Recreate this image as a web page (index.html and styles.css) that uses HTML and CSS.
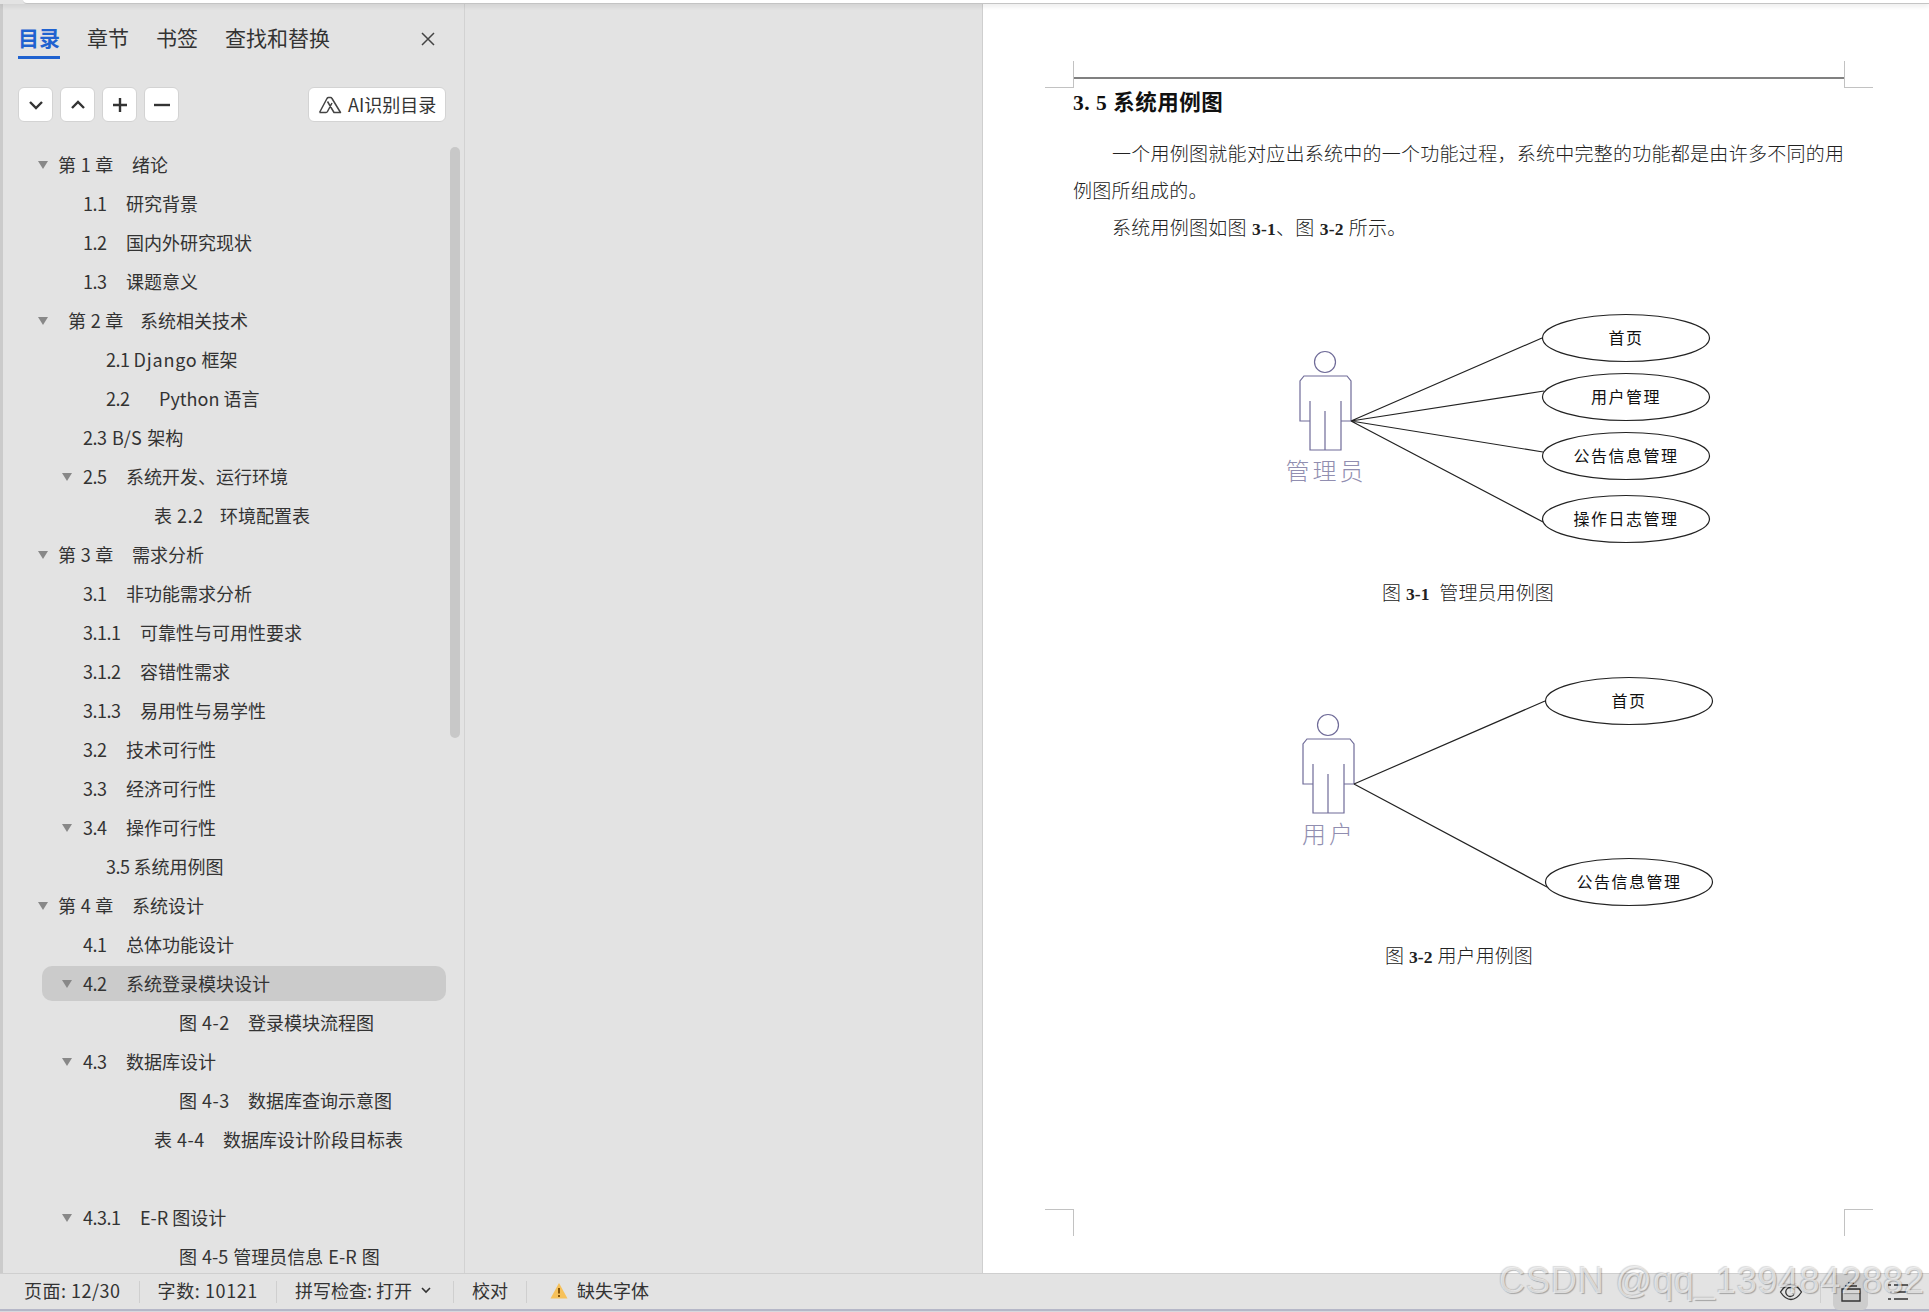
FILE: index.html
```html
<!DOCTYPE html>
<html lang="zh-CN">
<head>
<meta charset="utf-8">
<title>目录</title>
<link rel="stylesheet" href="styles.css">
</head>
<body>
<div class="app">
  <div class="topstrip"><div class="topstrip-gap"></div><div class="topstrip-fill"></div></div>
  <div class="main">
    <aside class="sidebar">
      <div class="tabs">
        <span class="tab active">目录</span>
        <span class="tab">章节</span>
        <span class="tab">书签</span>
        <span class="tab">查找和替换</span>
        <svg class="close" width="16" height="16" viewBox="0 0 16 16"><path d="M2 2L14 14M14 2L2 14" stroke="#444" stroke-width="1.5" fill="none"/></svg>
      </div>
      <div class="tools">
        <button class="tool"><svg width="16" height="16" viewBox="0 0 16 16"><path d="M2 5L8 11L14 5" stroke="#333" stroke-width="2.4" fill="none"/></svg></button>
        <button class="tool"><svg width="16" height="16" viewBox="0 0 16 16"><path d="M2 11L8 5L14 11" stroke="#333" stroke-width="2.4" fill="none"/></svg></button>
        <button class="tool"><svg width="16" height="16" viewBox="0 0 16 16"><path d="M8 1V15M1 8H15" stroke="#333" stroke-width="2.4" fill="none"/></svg></button>
        <button class="tool"><svg width="18" height="16" viewBox="0 0 18 16"><path d="M1 8H17" stroke="#333" stroke-width="2.4" fill="none"/></svg></button>
        <button class="ai"><svg width="24" height="18" viewBox="0 0 24 18"><path d="M1.500 16.500L9 2.500Q9.600 1.500 10.500 1.500H12.500Q13.500 1.500 14 2.500L22.500 16.500H16L9.500 5.500M1.500 16.500H8Q9 16.500 9.500 15.500L14 7" stroke="#444" stroke-width="1.500" fill="none" stroke-linejoin="round"/></svg><span class="ai-label">AI识别目录</span></button>
      </div>
      <div class="tree">
        <ul class="list">
          <li class="row l0"><i class="arr"></i><span class="n n73">第 1 章</span>绪论</li>
          <li class="row l1"><span class="n n43"><b>1.1</b></span>研究背景</li>
          <li class="row l1"><span class="n n43"><b>1.2</b></span>国内外研究现状</li>
          <li class="row l1"><span class="n n43"><b>1.3</b></span>课题意义</li>
          <li class="row l0b"><i class="arr wide"></i><span class="n n72">第 2 章</span>系统相关技术</li>
          <li class="row l2"><span><b>2.1</b> <span class="lat">Django</span> 框架</span></li>
          <li class="row l2"><span class="n n53"><b>2.2</b></span>Python 语言</li>
          <li class="row l1 spaced3"><span><b>2.3</b> B/S 架构</span></li>
          <li class="row l1"><i class="arr"></i><span class="n n43"><b>2.5</b></span>系统开发、运行环境</li>
          <li class="row l3"><span class="n n66 loose">表 2.2</span>环境配置表</li>
          <li class="row l0"><i class="arr"></i><span class="n n73">第 3 章</span>需求分析</li>
          <li class="row l1"><span class="n n43"><b>3.1</b></span>非功能需求分析</li>
          <li class="row l1"><span class="n n57"><b>3.1.1</b></span>可靠性与可用性要求</li>
          <li class="row l1"><span class="n n57"><b>3.1.2</b></span>容错性需求</li>
          <li class="row l1"><span class="n n57"><b>3.1.3</b></span>易用性与易学性</li>
          <li class="row l1"><span class="n n43"><b>3.2</b></span>技术可行性</li>
          <li class="row l1"><span class="n n43"><b>3.3</b></span>经济可行性</li>
          <li class="row l1"><i class="arr"></i><span class="n n43"><b>3.4</b></span>操作可行性</li>
          <li class="row l2"><span><b>3.5</b> 系统用例图</span></li>
          <li class="row l0"><i class="arr"></i><span class="n n73">第 4 章</span>系统设计</li>
          <li class="row l1"><span class="n n43"><b>4.1</b></span>总体功能设计</li>
          <li class="row l1 selected"><i class="arr"></i><span class="n n43"><b>4.2</b></span>系统登录模块设计</li>
          <li class="row l4"><span class="n n70 loose">图 4-2</span>登录模块流程图</li>
          <li class="row l1"><i class="arr"></i><span class="n n43"><b>4.3</b></span>数据库设计</li>
          <li class="row l4"><span class="n n70 loose">图 4-3</span>数据库查询示意图</li>
          <li class="row l3"><span class="n n69 loose">表 4-4</span>数据库设计阶段目标表</li>
          <li class="row blank"></li>
          <li class="row l1"><i class="arr"></i><span class="n n57"><b>4.3.1</b></span>E-R 图设计</li>
          <li class="row l4 spaced2">图 4-5 管理员信息 E-R 图</li>
        </ul>
        <div class="scroll"><div class="thumb"></div></div>
      </div>
    </aside>
    <div class="gap"></div>
    <section class="page">
      <div class="crop c-tl"></div>
      <div class="crop c-tr"></div>
      <div class="crop c-bl"></div>
      <div class="crop c-br"></div>
      <div class="header-line"></div>
      <h2 class="heading">3. 5 系统用例图</h2>
      <p class="para indent">一个用例图就能对应出系统中的一个功能过程，系统中完整的功能都是由许多不同的用</p>
      <p class="para">例图所组成的。</p>
      <p class="para indent">系统用例图如图 <b>3-1</b>、图 <b>3-2</b> 所示。</p>
      <svg class="fig fig1" viewBox="1260 300 480 280" width="480" height="280">
        <g class="actor">
          <circle cx="1325" cy="362" r="10.5"/>
          <path d="M1310 421H1300V381L1304 376H1347L1351 381V421H1341M1310 401V450H1341V401M1325 411V450"/>
        </g>
        <text class="actor-label" x="1326" y="480" text-anchor="middle">管理员</text>
        <g class="links">
          <path d="M1351 421L1542 338M1351 421L1544 391M1351 421L1543 452M1351 421L1545 523"/>
          <ellipse cx="1626" cy="338" rx="83.5" ry="23.5"/>
          <ellipse cx="1626" cy="397" rx="83.5" ry="23.5"/>
          <ellipse cx="1626" cy="456" rx="83.5" ry="23.5"/>
          <ellipse cx="1626" cy="519" rx="83.5" ry="23.5"/>
        </g>
        <text class="uc" x="1626" y="344" text-anchor="middle">首页</text>
        <text class="uc" x="1626" y="403" text-anchor="middle">用户管理</text>
        <text class="uc" x="1626" y="462" text-anchor="middle">公告信息管理</text>
        <text class="uc" x="1626" y="525" text-anchor="middle">操作日志管理</text>
      </svg>
      <p class="caption cap1">图 <b>3-1</b>&nbsp;&nbsp;管理员用例图</p>
      <svg class="fig fig2" viewBox="1260 660 480 280" width="480" height="280">
        <g class="actor">
          <circle cx="1328" cy="725" r="10.5"/>
          <path d="M1313 784H1303V744L1307 739H1350L1354 744V784H1344M1313 764V813H1344V764M1328 774V813"/>
        </g>
        <text class="actor-label" x="1329" y="843" text-anchor="middle">用户</text>
        <g class="links">
          <path d="M1354 784L1545 701M1354 784L1547 887"/>
          <ellipse cx="1629" cy="701" rx="83.5" ry="23.5"/>
          <ellipse cx="1629" cy="882" rx="83.5" ry="23.5"/>
        </g>
        <text class="uc" x="1629" y="707" text-anchor="middle">首页</text>
        <text class="uc" x="1629" y="888" text-anchor="middle">公告信息管理</text>
      </svg>
      <p class="caption cap2">图 <b>3-2</b> 用户用例图</p>
    </section>
  </div>
  <footer class="status">
    <span class="st num1">页面: 12/30</span><i class="sep"></i>
    <span class="st num2">字数: 10121</span><i class="sep"></i>
    <span class="st">拼写检查: 打开<svg class="caret" width="10" height="8" viewBox="0 0 10 8"><path d="M1 2L5 6L9 2" stroke="#333" stroke-width="1.6" fill="none"/></svg></span><i class="sep"></i>
    <span class="st">校对</span><i class="sep"></i>
    <span class="st warn"><svg width="18" height="17" viewBox="0 0 18 17"><path d="M9 1L17.5 16.5H.5Z" fill="#f6c15a"/><path d="M9 6V11.5M9 13V15" stroke="#7a4a00" stroke-width="1.8"/></svg>缺失字体</span>
    <div class="st-right">
      <svg width="24" height="18" viewBox="0 0 24 18"><path d="M1.5 9C5 3.5 8.500 1.500 12 1.500S19 3.500 22.500 9C19 14.500 15.500 16.500 12 16.500S5 14.500 1.500 9Z M15 6.500A4.500 4.500 0 1 0 15 11.500" stroke="#333" stroke-width="1.3" fill="none"/></svg>
      <i class="sep2"></i>
      <span class="st-active"><svg width="20" height="20" viewBox="0 0 20 20"><path d="M1 7H19V19H1ZM4 4H16M7 1H13" stroke="#333" stroke-width="1.4" fill="none"/></svg></span>
      <svg class="outline" width="22" height="18" viewBox="0 0 22 18"><path d="M7 2H21M7 9H21M7 16H21M1 2H4M3 9H5M1 16H4" stroke="#333" stroke-width="1.4" fill="none"/></svg>
    </div>
  </footer>
  <div class="edge"></div>
  <div class="watermark">CSDN @qq_1394842882</div>
</div>
</body>
</html>
```
FILE: styles.css
```css
* { box-sizing: border-box; }
html, body { margin: 0; padding: 0; }
body { width: 1929px; height: 1312px; overflow: hidden; font-family: "Noto Sans CJK SC", "Noto Sans", sans-serif; color: #333; background: #e3e3e3; }
.app { position: relative; display: flex; flex-direction: column; width: 1929px; height: 1312px; overflow: hidden; }

.topstrip { position: relative; z-index: 1; display: flex; height: 4px; flex: none; box-shadow: 0 2px 5px rgba(0,0,0,.1); }
.topstrip-gap { width: 23px; background: #e3e3e3; }
.topstrip-fill { flex: 1; background: #fff; border-bottom: 1px solid #c4c4c4; border-bottom-left-radius: 6px; }

.main { display: flex; height: 1269px; flex: none; overflow: hidden; }
.sidebar { width: 465px; flex: none; display: flex; flex-direction: column; background: #e3e3e3; border-right: 1px solid #d2d2d2; border-left: 3px solid #cbcbcb; overflow: hidden; box-shadow: 1px 0 0 #efefef; }
.gap { width: 517px; flex: none; background: #e3e3e3; }

.tabs { display: flex; align-items: flex-start; padding: 20px 0 0 15px; flex: none; position: relative; height: 55px; }
.tab { font-size: 21px; line-height: 26px; height: 35px; padding-bottom: 6px; margin-right: 27px; color: #333; border-bottom: 3px solid transparent; }
.tab.active { color: #1f62d0; font-weight: 700; border-bottom-color: #1f62d0; }
.close { margin: 7px 28px 0 auto; }

.tools { display: flex; gap: 7px; margin: 28px 0 0 15px; width: 428px; height: 35px; flex: none; }
.tool { width: 35px; height: 35px; padding: 0; display: flex; align-items: center; justify-content: center; background: #fff; border: 1px solid #d3d3d3; border-radius: 6px; }
.ai { margin-left: auto; width: 138px; height: 35px; padding: 0 0 0 9px; display: flex; align-items: center; gap: 6px; background: #fff; border: 1px solid #d3d3d3; border-radius: 6px; font-family: inherit; font-size: 18px; color: #333; white-space: nowrap; }
.ai-label { padding-bottom: 2px; }

.tree { display: flex; margin-top: 25px; flex: 1; min-height: 0; }
.list { list-style: none; margin: 0; padding: 0; width: 443px; flex: none; display: flex; flex-direction: column; gap: 4px; }
.row { display: flex; align-items: center; flex: none; height: 35px; padding-bottom: 2px; margin-left: 39px; width: 404px; font-size: 18px; color: #333; white-space: pre; border-radius: 10px; }
.row b { font-weight: 400; letter-spacing: -0.5px; }
.selected { background: #cbcbcb; }
.l0 { padding-left: 16px; }
.l0b { padding-left: 26px; }
.l1 { padding-left: 41px; }
.l2 { padding-left: 64px; }
.l3 { padding-left: 112px; }
.l4 { padding-left: 137px; }
.spaced3 { word-spacing: 1.500px; }
.spaced2 { word-spacing: 1px; }
.lat { letter-spacing: .8px; }
.loose { letter-spacing: .5px; }
.arr { flex: none; width: 0; height: 0; margin: 2px 11px 0 -21px; border-left: 5px solid transparent; border-right: 5px solid transparent; border-top: 8px solid #888; }
.l0 .arr { margin-left: -20px; margin-right: 10px; }
.arr.wide { margin-left: -30px; margin-right: 20px; }
.n { flex: none; }
.n73 { width: 74px; letter-spacing: .3px; }
.n72 { width: 72px; letter-spacing: .3px; }
.n43 { width: 43px; }
.n53 { width: 53px; }
.n57 { width: 57px; }
.n66 { width: 66px; }
.n69 { width: 69px; }
.n70 { width: 69px; }

.scroll { margin-left: 4px; width: 10px; }
.thumb { width: 10px; height: 591px; background: #c8c8c8; border-radius: 5px; }

.page { position: relative; flex: 1; background: #fff; padding: 73px 0 0 90px; overflow: hidden; border-left: 1px solid #cfcfcf; font-family: "Liberation Serif", "Noto Sans CJK SC", serif; color: #222; font-weight: 300; }
.crop { position: absolute; width: 29px; height: 27px; border: 0 solid #c2c2c2; }
.c-tl { left: 62px; top: 57px; border-right-width: 1px; border-bottom-width: 1px; }
.c-tr { left: 861px; top: 57px; border-left-width: 1px; border-bottom-width: 1px; }
.c-bl { left: 62px; top: 1205px; border-right-width: 1px; border-top-width: 1px; }
.c-br { left: 861px; top: 1205px; border-left-width: 1px; border-top-width: 1px; }
.header-line { width: 771px; height: 2px; background: #808080; }
.heading { margin: 9px 0 0; font-size: 21.500px; line-height: 30px; font-weight: 700; color: #111; letter-spacing: .5px; }
.para { margin: 0; width: 790px; font-size: 19px; letter-spacing: .27px; line-height: 37px; white-space: nowrap; }
.heading + .para { margin-top: 18px; }
.para b, .caption b { font-weight: 700; font-size: 17.500px; }
.indent { text-indent: 39px; }
.fig { display: block; margin-left: 187px; }
.fig1 { margin-top: 52px; }
.fig2 { margin-top: 54px; }
.caption { font-size: 19px; letter-spacing: .1px; line-height: 24px; white-space: nowrap; }
.cap1 { margin: 2px 0 0; padding-left: 309px; }
.cap2 { margin: 5px 0 0; padding-left: 312px; }
.actor { fill: none; stroke: #6f6b98; stroke-width: 1.2; }
.links { fill: #fff; stroke: #222; stroke-width: 1.2; }
.links path { fill: none; }
.actor-label { font-family: "Noto Sans CJK SC", sans-serif; font-size: 24px; letter-spacing: 3px; fill: #918eb0; font-weight: 300; }
.uc { font-family: "Noto Sans CJK SC", sans-serif; font-size: 16px; letter-spacing: 1.500px; fill: #111; font-weight: 400; }

.status { position: relative; display: flex; align-items: center; height: 36px; flex: none; padding-left: 24px; background: #e3e3e3; border-top: 1px solid #cfcfcf; font-size: 18px; color: #333; white-space: nowrap; }
.st { display: flex; align-items: center; padding-bottom: 3px; }
.num1 { letter-spacing: .5px; }
.num2 { letter-spacing: .6px; }
.sep { width: 1px; height: 22px; background: #cfcfcf; margin: 0 18px; flex: none; }
.caret { margin-left: 9px; margin-right: 4px; }
.warn svg { margin-right: 9px; margin-left: 5px; }
.st-right { margin-left: auto; display: flex; align-items: center; height: 35px; padding-right: 20px; }
.sep2 { width: 1px; height: 22px; background: #cfcfcf; margin: 0 12px 0 17px; }
.st-active { width: 35px; height: 36px; display: flex; align-items: center; justify-content: center; background: #cdcdcd; border-radius: 6px; margin-right: 19px; }
.edge { height: 3px; flex: none; background: #b5b7c8; border-bottom: 1px solid #d8d8de; }

.watermark { position: absolute; left: 1499px; top: 1258px; font-family: "Liberation Sans", sans-serif; font-size: 36px; line-height: 46px; letter-spacing: .9px; color: rgba(248,248,248,.7); text-shadow: 1px 1px 1px rgba(0,0,0,.28), -1px -1px 1px rgba(0,0,0,.14); white-space: nowrap; }
```
